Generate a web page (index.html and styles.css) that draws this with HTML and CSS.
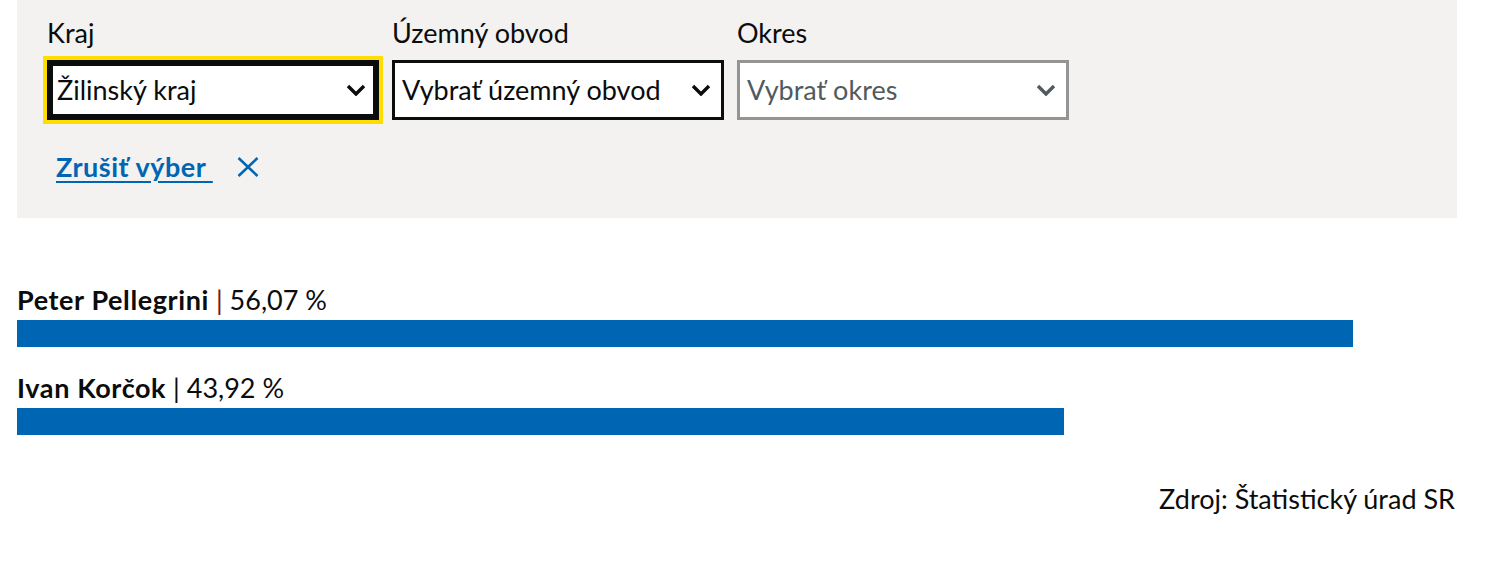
FILE: index.html
```html
<!DOCTYPE html>
<html lang="sk">
<head>
<meta charset="utf-8">
<title>Výsledky</title>
<link rel="stylesheet" href="styles.css">
</head>
<body>
<div class="page">
  <div class="filter">
    <div class="fields">
      <div class="field">
        <div class="label">Kraj</div>
        <div class="select is-focus">
          <span class="value">Žilinský kraj</span>
          <svg class="chev" viewBox="0 0 20 12" width="20" height="12"><polyline points="2,2 10,10 18,2" fill="none" stroke="currentColor" stroke-width="3.4"/></svg>
        </div>
      </div>
      <div class="field">
        <div class="label">Územný obvod</div>
        <div class="select">
          <span class="value">Vybrať územný obvod</span>
          <svg class="chev" viewBox="0 0 20 12" width="20" height="12"><polyline points="2,2 10,10 18,2" fill="none" stroke="currentColor" stroke-width="3.4"/></svg>
        </div>
      </div>
      <div class="field">
        <div class="label">Okres</div>
        <div class="select is-disabled">
          <span class="value">Vybrať okres</span>
          <svg class="chev" viewBox="0 0 20 12" width="20" height="12"><polyline points="2,2 10,10 18,2" fill="none" stroke="currentColor" stroke-width="3.4"/></svg>
        </div>
      </div>
    </div>
    <div class="clear">
      <a class="clear-link" href="#">Zrušiť výber&nbsp;</a>
      <svg class="clear-x" viewBox="0 0 22 20" width="22" height="20"><line x1="1.5" y1="1" x2="20.5" y2="19" stroke="currentColor" stroke-width="2.6"/><line x1="20.5" y1="1" x2="1.5" y2="19" stroke="currentColor" stroke-width="2.6"/></svg>
    </div>
  </div>

  <div class="results">
    <div class="row">
      <div class="row-label"><b>Peter Pellegrini</b> <span class="sep sep-red">|</span> 56,07 %</div>
      <div class="bar" style="width: 92.78%"></div>
    </div>
    <div class="row">
      <div class="row-label"><b>Ivan Korčok</b> <span class="sep">|</span> 43,92 %</div>
      <div class="bar" style="width: 72.71%"></div>
    </div>
  </div>

  <div class="source">Zdroj: Štatistický úrad SR</div>
</div>
</body>
</html>
```

FILE: styles.css
```css
* { box-sizing: border-box; }

html, body {
  margin: 0;
  padding: 0;
  background: #ffffff;
}

body {
  font-family: Lato, "Liberation Sans", sans-serif;
  color: #0b0c0c;
}

.page {
  width: 1440px;
  margin-left: 17px;
}

.filter {
  background: #f3f2f1;
  padding: 15px 30px 33px 30px;
}

.fields {
  display: flex;
  gap: 13px;
}

.field {
  width: 332px;
  display: flex;
  flex-direction: column;
}

.label {
  font-size: 27px;
  line-height: 36px;
  margin-bottom: 9px;
}

.select {
  height: 60px;
  border: 3px solid #0b0c0c;
  background: #ffffff;
  display: flex;
  align-items: center;
  justify-content: space-between;
  padding: 0 10px 0 7px;
  font-size: 27px;
  line-height: 32px;
  color: #0b0c0c;
}

.select.is-focus {
  outline: 4px solid #ffdd00;
  outline-offset: 0;
  box-shadow: inset 0 0 0 3px #0b0c0c;
}

.select.is-disabled {
  border-color: #949494;
  color: #505a5f;
}

.chev {
  display: block;
  flex: none;
}

.clear {
  display: flex;
  align-items: center;
  gap: 24px;
  margin-top: 29px;
  padding-left: 9px;
}

.clear-link {
  font-size: 27px;
  line-height: 36px;
  font-weight: 700;
  letter-spacing: 0.5px;
  color: #0065b3;
  text-decoration: underline;
  text-decoration-thickness: 2px;
  text-underline-offset: 4px;
}

.clear-x {
  display: block;
  color: #0065b3;
}

.results {
  margin-top: 66px;
  display: flex;
  flex-direction: column;
  gap: 25px;
}

.row-label {
  font-size: 27px;
  line-height: 32px;
}

.row-label b {
  font-weight: 700;
  letter-spacing: 0.6px;
}

.sep {
  color: #0b0c0c;
}

.sep-red {
  color: #7a1414;
}

.bar {
  height: 27px;
  background: #0065b3;
  margin-top: 4px;
}

.source {
  margin-top: 48px;
  text-align: right;
  font-size: 27px;
  line-height: 32px;
  padding-right: 2px;
}
```
